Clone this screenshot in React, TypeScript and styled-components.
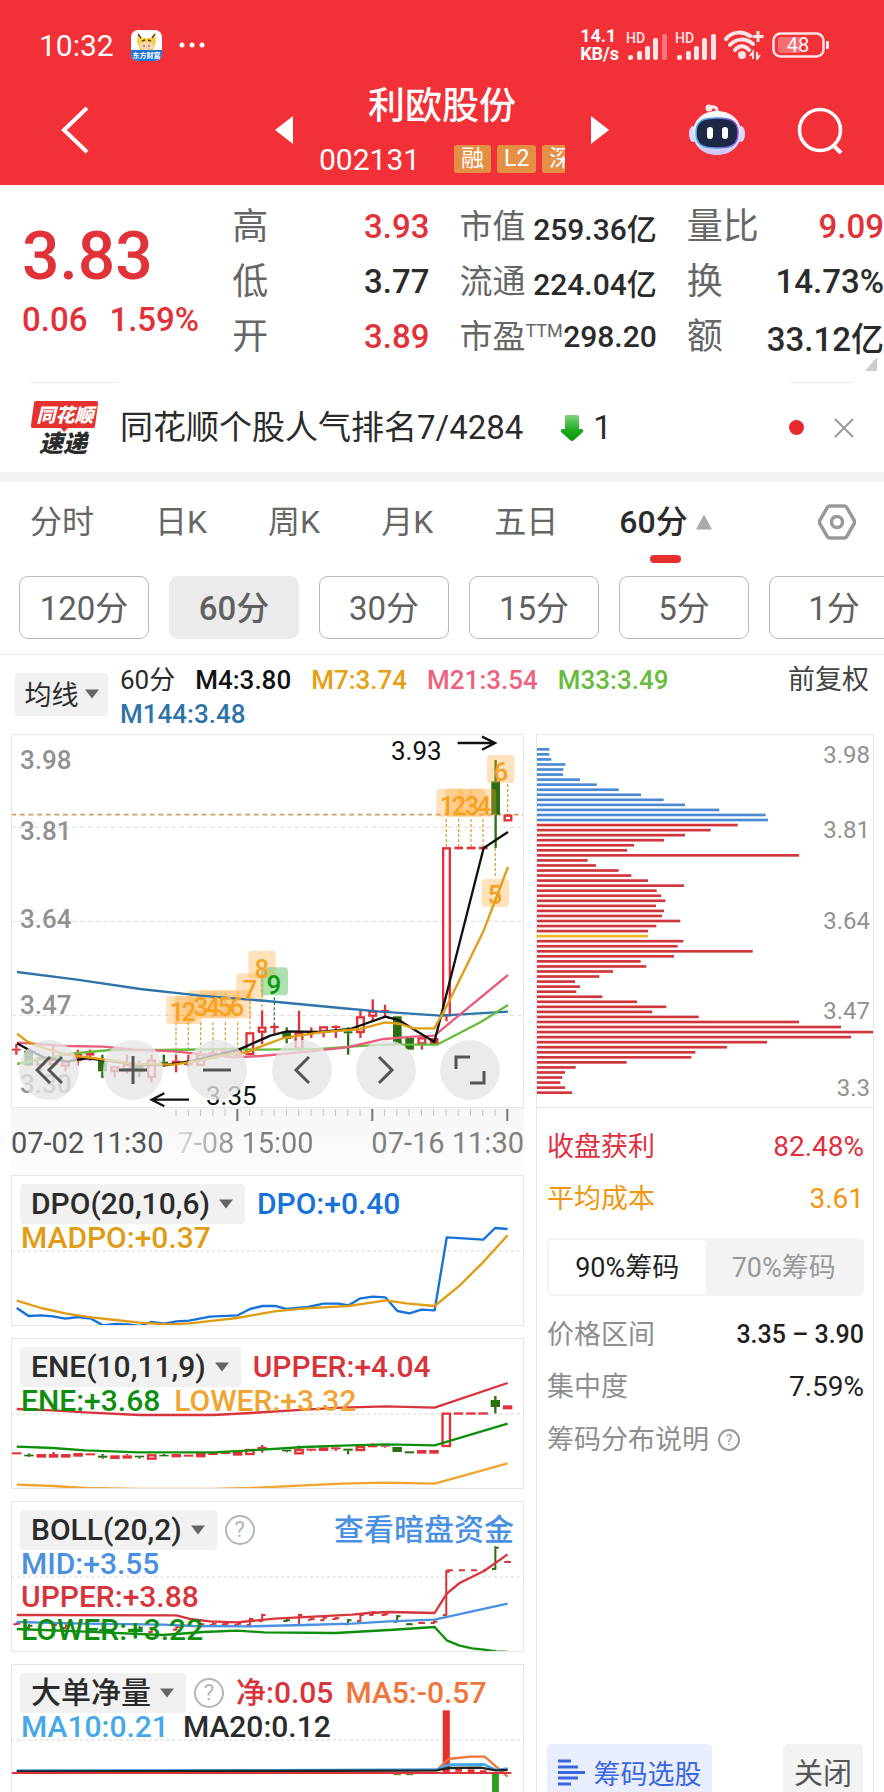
import React from 'react';
import styled, { createGlobalStyle } from 'styled-components';

const RED = '#e03238';
const GREEN = '#2c6e12';
const ORANGE = '#e09c14';
const BLUE = '#2f74a8';

const Global = createGlobalStyle`
  *, *::before, *::after { box-sizing: border-box; }
  body { margin: 0; background: #fff; font-family: Roboto, "Noto Sans CJK SC", sans-serif; color: #2b2b2b; }
  button { font: inherit; color: inherit; border: 0; background: none; padding: 0; white-space: nowrap; cursor: pointer; }
  svg { display: block; flex: none; }
  dl, dt, dd, h1, p { margin: 0; font-weight: inherit; }
`;

const Screen = styled.div`
  height: 100vh;
  overflow: hidden;
`;

/* ---------- header ---------- */
const Header = styled.header`
  background: #f23038;
  color: #fff;
  padding-top: 15px;
`;
const StatusBar = styled.div`
  height: 60px;
  padding: 0 54px 0 39px;
  display: flex;
  align-items: center;
  justify-content: space-between;
`;
const StatusGroup = styled.div<{ $gap: number }>`
  display: flex;
  align-items: center;
  gap: ${p => p.$gap}px;
`;
const Clock = styled.span`
  font-size: 30px;
`;
const Speed = styled.span`
  font-size: 18px;
  line-height: 18px;
  font-weight: 700;
`;
const NavBar = styled.nav`
  height: 110px;
  display: grid;
  grid-template-columns: 1fr 334px 1fr;
  align-items: center;
`;
const BackButton = styled.button`
  justify-self: start;
  margin-left: 60px;
`;
const TitleArea = styled.div`
  display: flex;
  align-items: center;
  justify-content: space-between;
`;
const TitleColumn = styled.div`
  width: 246px;
  padding-top: 4px;
`;
const StockName = styled.h1`
  font-size: 37px;
  line-height: 54px;
  font-weight: 500;
  text-align: center;
`;
const CodeRow = styled.div`
  display: flex;
  align-items: center;
  justify-content: space-between;
  height: 50px;
  font-size: 30px;
`;
const TagStrip = styled.div`
  display: flex;
  gap: 6px;
  width: 111px;
  overflow: hidden;
`;
const Tag = styled.span`
  flex: none;
  padding: 0 7px;
  height: 28px;
  line-height: 28px;
  border-radius: 3px;
  background: #e58f45;
  font-size: 23px;
`;
const NavActions = styled.div`
  display: flex;
  justify-content: flex-end;
  align-items: center;
  gap: 52px;
  padding-right: 40px;
`;

/* ---------- quote ---------- */
const Quote = styled.section`
  position: relative;
  height: 197px;
  padding: 14px 0 0 22px;
  display: grid;
  grid-template-columns: 180fr 197fr 197fr 197fr;
  gap: 30px;
`;
const PriceBlock = styled.div`
  color: ${RED};
  padding-top: 24px;
`;
const Price = styled.div`
  font-size: 66px;
  line-height: 68px;
  font-weight: 500;
`;
const Change = styled.div`
  display: flex;
  gap: 22px;
  font-size: 33px;
  line-height: 58px;
  font-weight: 500;
  white-space: nowrap;
`;
const Stats = styled.dl``;
const Stat = styled.div`
  display: flex;
  justify-content: space-between;
  align-items: center;
  height: 55px;
  white-space: nowrap;
`;
const StatLabel = styled.dt<{ $compact?: boolean }>`
  display: flex;
  font-size: ${p => (p.$compact ? 33 : 36)}px;
  line-height: 40px;
  color: #666;
`;
const Sup = styled.sup`
  font-size: 18px;
  line-height: 28px;
`;
const StatValue = styled.dd<{ $compact?: boolean; $up?: boolean }>`
  font-size: ${p => (p.$compact ? 30 : 33)}px;
  font-weight: 500;
  color: ${p => (p.$up ? RED : '#2b2b2b')};
`;
const Corner = styled.svg`
  position: absolute;
  right: 7px;
  bottom: 11px;
`;

/* ---------- news ---------- */
const Rules = styled.div`
  height: 1px;
  display: flex;
  justify-content: space-between;
  padding: 0 31px;
`;
const Rule = styled.span<{ $w: number }>`
  width: ${p => p.$w}px;
  background: #e8e8e8;
`;
const News = styled.section`
  height: 89px;
  padding: 0 30px 0 31px;
  display: flex;
  align-items: center;
`;
const Logo = styled.svg`
  margin-right: 21px;
`;
const Headline = styled.p`
  font-size: 33px;
  line-height: 46px;
  white-space: nowrap;
  margin-right: 37px;
`;
const RankChange = styled.span`
  display: flex;
  align-items: center;
  gap: 9px;
  font-size: 33px;
`;
const Dot = styled.span`
  width: 15px;
  height: 15px;
  border-radius: 50%;
  background: #e8282d;
  margin-left: auto;
  margin-right: 30px;
`;
const Band = styled.div`
  height: 10px;
  background: #f3f3f3;
`;

/* ---------- period tabs ---------- */
const Tabs = styled.div`
  height: 94px;
  padding: 0 28px 0 30px;
  display: flex;
  gap: 61px;
  align-items: flex-start;
`;
const TabButton = styled.button<{ $active?: boolean }>`
  display: flex;
  flex-direction: column;
  align-items: center;
  font-size: 32px;
  line-height: 80px;
  height: 81px;
  color: ${p => (p.$active ? '#2b2b2b' : '#666')};
  font-weight: ${p => (p.$active ? 500 : 400)};
`;
const TabLabel = styled.span`
  display: flex;
  align-items: center;
  gap: 8px;
`;
const Underline = styled.span`
  flex: none;
  margin-top: -7px;
  width: 31px;
  height: 8px;
  border-radius: 4px;
  background: #e6302e;
`;
const SettingsButton = styled.button`
  margin-left: auto;
  padding-top: 22px;
`;
const Pills = styled.div`
  display: flex;
  gap: 20px;
  padding: 0 0 15px 19px;
  overflow: hidden;
  border-bottom: 1px solid #eaeaea;
`;
const Pill = styled.button<{ $active?: boolean }>`
  flex: none;
  width: 130px;
  height: 63px;
  padding-bottom: 4px;
  border-radius: 9px;
  border: 1px solid ${p => (p.$active ? '#ebebeb' : '#b8b8b8')};
  background: ${p => (p.$active ? '#ebebeb' : '#fff')};
  font-size: 33px;
  color: #606060;
  font-weight: ${p => (p.$active ? 500 : 400)};
`;

/* ---------- moving averages ---------- */
const MaRow = styled.div`
  height: 79px;
  padding: 8px 15px 0;
  display: flex;
`;
const MaButton = styled.button`
  display: flex;
  align-items: center;
  justify-content: center;
  gap: 6px;
  width: 93px;
  height: 43px;
  margin: 10px 12px 0 0;
  padding-bottom: 2px;
  border-radius: 4px;
  background: #f1f1f1;
  font-size: 27px;
`;
const MaList = styled.div`
  flex: 1;
  display: flex;
  flex-wrap: wrap;
  align-content: flex-start;
  column-gap: 20px;
  padding-right: 60px;
  font-size: 26px;
  line-height: 34px;
  font-weight: 500;
`;
const Tone = styled.span<{ $c: string }>`
  color: ${p => p.$c};
`;
const Plain = styled.span`
  font-weight: 400;
`;
const Adjust = styled.button`
  align-self: flex-start;
  font-size: 27px;
  line-height: 34px;
  color: #444;
`;

/* ---------- charts ---------- */
const Body = styled.main`
  display: grid;
  grid-template-columns: 513fr 338fr;
  gap: 12px;
  padding: 0 10px 0 11px;
`;
const LeftColumn = styled.div`
  display: flex;
  flex-direction: column;
`;
const ChartBox = styled.section`
  position: relative;
  outline: 1px solid #e6e6e6;
  outline-offset: -1px;
`;
const Drawing = styled.svg`
  width: 100%;
  height: auto;
`;
const Controls = styled.div`
  position: absolute;
  left: 0;
  right: 0;
  bottom: 8px;
  display: flex;
  justify-content: space-between;
  padding: 0 24px 0 8px;
`;
const RoundButton = styled.button`
  width: 60px;
  height: 60px;
  border-radius: 50%;
  background: rgba(230, 230, 230, 0.78);
  display: flex;
  align-items: center;
  justify-content: center;
`;
const TimeAxis = styled.div`
  height: 67px;
  background: linear-gradient(#f6f6f6, #fdfdfd);
`;
const Dates = styled.div`
  display: flex;
  justify-content: space-between;
  padding-top: 3px;
  font-size: 29px;
  line-height: 36px;
  white-space: nowrap;
  color: #808080;
`;
const FirstDate = styled.span`
  color: #555;
`;
const FadedDate = styled.span`
  margin-right: 44px;
  background: linear-gradient(90deg, #ddd, #808080 50%);
  background-clip: text;
  -webkit-background-clip: text;
  color: transparent;
`;
const Panel = styled(ChartBox)`
  & + & { margin-top: 12px; }
`;
const Legend = styled.div`
  position: absolute;
  inset: 0;
  padding: 9px 10px 0 9px;
  font-size: 30px;
  line-height: 33px;
  font-weight: 500;
  white-space: nowrap;
`;
const LegendHead = styled.div`
  height: 37px;
  display: flex;
  align-items: flex-start;
  gap: 12px;
  line-height: 40px;
`;
const LegendLine = styled.div`
  display: flex;
  gap: 14px;
  padding-left: 1px;
`;
const IndicatorButton = styled.button`
  height: 40px;
  padding: 0 12px 0 11px;
  border-radius: 4px;
  background: #f1f1f1;
  display: flex;
  align-items: center;
  gap: 9px;
`;
const HelpButton = styled.button<{ $size: number }>`
  flex: none;
  width: ${p => p.$size}px;
  height: ${p => p.$size}px;
  border: 2px solid currentColor;
  border-radius: 50%;
  font-size: ${p => p.$size - 8}px;
  line-height: ${p => p.$size - 4}px;
  font-weight: 400;
  color: #b5b5b5;
`;
const HeadHelp = styled(HelpButton)`
  margin: 5px 0 0 -4px;
`;
const InfoHelp = styled(HelpButton)`
  color: #999;
`;
const MoreLink = styled.a`
  margin-left: auto;
  color: #4a90e2;
  font-size: 30px;
  font-weight: 500;
  text-decoration: none;
`;

/* ---------- chip distribution ---------- */
const RightColumn = styled.aside`
  display: flex;
  flex-direction: column;
  border: 1px solid #e6e6e6;
`;
const ChipChart = styled.div`
  border-bottom: 1px solid #e6e6e6;
`;
const Facts = styled.dl`
  padding: 13px 9px 0 10px;
  font-size: 27px;
  line-height: 52px;
`;
const Fact = styled.div<{ $c?: string }>`
  display: flex;
  justify-content: space-between;
  color: ${p => p.$c || '#8e8e8e'};
`;
const FactValue = styled.dd<{ $c?: string; $strong?: boolean }>`
  color: ${p => p.$c || 'inherit'};
  font-weight: ${p => (p.$strong ? 500 : 400)};
  font-size: ${p => (p.$strong ? 25 : 28)}px;
`;
const Segment = styled.div`
  display: flex;
  height: 58px;
  margin: 13px 9px 0 10px;
  padding: 2px;
  border-radius: 5px;
  background: #f3f3f3;
`;
const SegmentButton = styled.button<{ $active?: boolean }>`
  flex: 1;
  padding-bottom: 3px;
  border-radius: 4px;
  font-size: 27px;
  background: ${p => (p.$active ? '#fff' : 'transparent')};
  color: ${p => (p.$active ? '#1f1f1f' : '#999')};
`;
const Explain = styled.p`
  display: flex;
  align-items: center;
  gap: 9px;
  padding-left: 10px;
  font-size: 27px;
  line-height: 54px;
  color: #8e8e8e;
`;
const Footer = styled.div`
  margin-top: auto;
  display: flex;
  justify-content: space-between;
  padding: 0 10px 10px 10px;
`;
const PickButton = styled.button`
  width: 165px;
  height: 60px;
  padding-bottom: 4px;
  border-radius: 5px;
  background: #e8eefd;
  color: #3b66e0;
  font-size: 27px;
  display: flex;
  align-items: center;
  justify-content: center;
  gap: 9px;
`;
const CloseButton = styled.button`
  width: 80px;
  height: 60px;
  padding-bottom: 6px;
  border-radius: 5px;
  background: #f3f3f3;
  color: #555;
  font-size: 29px;
`;

const Caret = ({ up = false, size = 14, color = '#666' }: { up?: boolean; size?: number; color?: string }) => (
  <svg width={size} height={size} viewBox="0 0 14 14" fill={color}>
    <path d={up ? 'M7 0.500L14 13.500H0z' : 'M0 2.500H14L7 11.500z'} />
  </svg>
);

/* index, open/close top, bottom, wick top, wick bottom; kind: h hollow red, r solid red, g green */
type Candle = [number, number, number, number, number, 'h' | 'r' | 'g'];

const Candles = ({ data, step, width }: { data: Candle[]; step: number; width: number }) => (
  <>
    {data.map(([i, top, bottom, wt, wb, kind]) => {
      const x = 48 + i * step;
      const c = kind === 'g' ? GREEN : RED;
      const inset = kind === 'h' ? 3 : 0;
      return (
        <g key={i}>
          {wt < top && <path d={`M${x} ${wt}V${top}`} stroke={c} strokeWidth="7" />}
          {wb > bottom && <path d={`M${x} ${bottom}V${wb}`} stroke={c} strokeWidth="7" />}
          <rect
            x={x - width / 2 + inset}
            y={top + inset}
            width={width - inset * 2}
            height={Math.max(1, bottom - top - inset * 2)}
            fill={kind === 'h' ? '#fff' : c}
            stroke={kind === 'h' ? c : 'none'}
            strokeWidth="7"
          />
        </g>
      );
    })}
  </>
);

const Curve = ({ points, color, w = 7 }: { points: string; color: string; w?: number }) => (
  <polyline points={points} fill="none" stroke={color} strokeWidth={w} strokeLinejoin="round" />
);

const mainCandles: Candle[] = [
  [0, 954, 960, 940, 972, 'r'], [1, 960, 1005, 952, 1005, 'g'], [2, 980, 1005, 975, 1020, 'h'], [3, 985, 1003, 940, 1012, 'h'],
  [4, 990, 1008, 990, 1022, 'h'], [5, 970, 990, 957, 1005, 'r'], [6, 965, 975, 957, 990, 'r'], [7, 988, 1022, 972, 1042, 'g'],
  [8, 1007, 1024, 1007, 1040, 'h'], [9, 1000, 1018, 972, 1030, 'h'], [10, 1005, 1025, 990, 1040, 'g'], [11, 987, 1042, 972, 1055, 'h'],
  [12, 993, 1003, 972, 1008, 'g'], [13, 990, 998, 972, 1025, 'r'], [14, 992, 1003, 972, 1008, 'r'], [15, 970, 1006, 960, 1006, 'h'],
  [16, 965, 983, 955, 985, 'h'], [17, 960, 972, 955, 975, 'h'], [18, 957, 975, 955, 975, 'h'], [19, 905, 973, 905, 973, 'h'],
  [20, 888, 906, 840, 940, 'h'], [21, 886, 892, 882, 908, 'r'], [22, 905, 925, 890, 938, 'g'], [23, 905, 957, 840, 960, 'h'],
  [24, 902, 908, 890, 922, 'r'], [25, 887, 906, 887, 920, 'h'], [26, 886, 892, 884, 922, 'r'], [27, 902, 908, 890, 972, 'g'],
  [28, 857, 907, 840, 922, 'h'], [29, 840, 858, 806, 870, 'h'], [30, 838, 844, 822, 860, 'r'], [31, 857, 940, 857, 940, 'g'],
  [32, 922, 957, 922, 957, 'g'], [33, 920, 941, 920, 957, 'h'], [34, 922, 941, 922, 941, 'r'], [35, 350, 857, 350, 872, 'h'],
  [36, 348, 356, 348, 356, 'r'], [37, 348, 356, 348, 356, 'r'], [38, 348, 356, 348, 356, 'r'], [39, 152, 252, 88, 352, 'g'],
  [40, 252, 272, 252, 272, 'h'],
];

/* left edge, top edge, stem x, stem start, stem end, up-count flag */
const badges: [number, number, number, number, number, boolean?][] = [
  [498, 796, 527, 875, 970], [523, 796, 564, 875, 970], [564, 779, 601, 875, 965], [597, 779, 638, 875, 960],
  [634, 779, 675, 875, 955], [671, 779, 712, 875, 955], [708, 728, 749, 812, 905], [744, 660, 785, 745, 840],
  [781, 710, 822, 800, 885, true],
  [1308, 174, 1338, 265, 350], [1334, 174, 1375, 265, 350], [1372, 174, 1412, 265, 350], [1406, 174, 1448, 265, 350],
  [1444, 445, 1485, 352, 440], [1460, 73, 1522, 160, 250],
];

const MainChart = () => (
  <Drawing viewBox="0 0 513 374" role="img" aria-label="60分 K线图">
    <g transform="translate(-10.667 -3.333) scale(0.33333)">
      <path d="M32 290H1569M32 572H1569M32 854H1569" stroke="#e2e2e2" strokeWidth="4" strokeDasharray="14 9" />
      <path d="M32 252H1569" stroke="#cf9f62" strokeWidth="5" strokeDasharray="15 11" />
    </g>
    <g fill="#919191" fontSize="26" fontWeight="500">
      <text x="9" y="35">3.98</text>
      <text x="9" y="106">3.81</text>
      <text x="9" y="194">3.64</text>
      <text x="9" y="280">3.47</text>
      <text x="9" y="359">3.30</text>
    </g>
    <g transform="translate(-10.667 -3.333) scale(0.33333)">
      <Candles data={mainCandles} step={36.87} width={26} />
      {badges.map(([x, y, stem, from, to, up]) => (
        <g key={x}>
          <rect x={x} y={y} width="82" height="84" rx="10" fill={up ? '#62c162' : '#ffa530'} opacity={up ? 0.5 : 0.32} />
          <path d={`M${stem} ${from}V${to}`} stroke={up ? '#3b8a3b' : '#d9a63a'} strokeWidth="4" strokeDasharray="9 6" />
        </g>
      ))}
      <Curve color={BLUE} points="50,724 230,747 420,775 600,795 800,811 1020,832 1140,843 1320,855 1523,843" />
      <Curve color="#68bb3c" points="50,1000 130,985 200,970 330,958 480,958 700,955 780,957 960,955 1050,948 1150,942 1310,942 1440,875 1523,823" />
      <Curve color="#e85d7c" points="50,936 200,946 310,948 400,957 520,962 600,970 700,980 780,976 900,965 1040,950 1150,925 1240,918 1302,915 1523,733" />
      <Curve color="#111" points="50,938 85,957 130,980 200,992 260,983 320,990 420,1003 500,1003 580,990 715,957 810,915 860,902 960,904 1050,895 1155,858 1195,868 1302,934 1450,352 1523,304" />
      <Curve color={ORANGE} points="50,909 80,932 130,952 200,972 300,985 400,1000 520,1002 600,990 660,975 740,965 780,948 850,922 960,905 1080,895 1155,875 1200,880 1240,893 1302,893 1345,815 1450,600 1523,409" />
      <g fill="none" stroke="#111" strokeWidth="7">
        <path d="M1372 37H1482M1445 18L1484 37L1445 57" />
        <path d="M566 1107H456M492 1088L454 1107L492 1127" />
      </g>
    </g>
    <g fill="#f6a11f" fontSize="26" fontWeight="500" textAnchor="middle">
      <text x="166" y="287">1</text>
      <text x="178" y="287">2</text>
      <text x="190" y="282">3</text>
      <text x="202" y="282">4</text>
      <text x="214" y="282">5</text>
      <text x="226" y="282">6</text>
      <text x="239" y="265">7</text>
      <text x="251" y="244">8</text>
      <text x="263" y="260" fill="#0a9a0a">9</text>
      <text x="436" y="81">1</text>
      <text x="448" y="81">2</text>
      <text x="461" y="81">3</text>
      <text x="473" y="81">4</text>
      <text x="484" y="170">5</text>
      <text x="490" y="47">6</text>
    </g>
    <g fill="#111" fontSize="26">
      <text x="380" y="26">3.93</text>
      <text x="195" y="371">3.35</text>
    </g>
  </Drawing>
);

const ticks = Array.from({ length: 28 }, (_, i) => ({ x: 165 + i * 12.27, major: i % 11 === 5 }));

const chipEnds = [
  58, 58, 64, 106, 100, 99, 150, 200, 266, 333, 401, 465, 568, 707, 714, 623, 542, 465, 402, 312, 291, 807, 173, 198,
  266, 304, 354, 462, 380, 393, 406, 378, 402, 396, 451, 379, 354, 354, 460, 443, 668, 432, 332, 349, 249, 208, 135,
  150, 139, 217, 321, 409, 367, 506, 807, 933, 1031, 963, 711, 591, 496, 484, 290, 137, 105, 97, 91, 105, 126,
];

const ChipBars = () => (
  <Drawing viewBox="0 0 336 372" role="img" aria-label="筹码分布">
    <g transform="translate(-7 -4.333) scale(0.33333)">
      {chipEnds.map((end, i) => (
        <rect key={i} x="21" y={52 + i * 15.147} width={end - 21} height="8"
          fill={i < 15 ? '#4b8ad3' : i === 37 ? '#f0b428' : '#d0363c'} />
      ))}
    </g>
    <g fill="#919191" fontSize="24" textAnchor="end">
      <text x="333" y="28">3.98</text>
      <text x="333" y="103">3.81</text>
      <text x="333" y="194">3.64</text>
      <text x="333" y="284">3.47</text>
      <text x="333" y="361">3.3</text>
    </g>
  </Drawing>
);

const eneCandles: Candle[] = [
  [0, 874, 880, 874, 880, 'r'], [1, 881, 886, 877, 888, 'g'], [2, 879, 890, 879, 890, 'r'], [3, 879, 890, 873, 890, 'r'],
  [4, 879, 890, 879, 890, 'r'], [5, 876, 887, 876, 887, 'r'], [6, 877, 883, 877, 883, 'r'], [7, 884, 890, 879, 893, 'g'],
  [8, 883, 894, 883, 894, 'r'], [9, 883, 893, 879, 893, 'r'], [10, 884, 889, 884, 893, 'g'], [11, 880, 896, 880, 896, 'h'],
  [12, 882, 886, 879, 886, 'g'], [13, 879, 889, 879, 889, 'r'], [14, 881, 887, 881, 887, 'r'], [15, 876, 889, 876, 889, 'r'],
  [16, 874, 882, 874, 882, 'r'], [17, 874, 879, 874, 879, 'r'], [18, 872, 884, 872, 884, 'r'], [19, 864, 882, 864, 882, 'h'],
  [20, 858, 866, 852, 875, 'r'], [22, 866, 871, 866, 874, 'g'], [23, 864, 880, 854, 880, 'h'], [24, 863, 869, 863, 871, 'r'],
  [25, 859, 870, 859, 870, 'r'], [26, 859, 865, 859, 870, 'r'], [27, 863, 869, 863, 880, 'g'], [28, 855, 870, 853, 870, 'h'],
  [29, 853, 859, 847, 859, 'r'], [30, 853, 857, 850, 860, 'r'], [31, 858, 873, 858, 873, 'g'], [32, 871, 877, 871, 877, 'g'],
  [33, 867, 878, 867, 878, 'r'], [34, 867, 878, 867, 878, 'r'], [35, 755, 858, 755, 858, 'h'], [36, 754, 761, 754, 761, 'r'],
  [37, 754, 761, 754, 761, 'r'], [38, 754, 761, 754, 761, 'r'], [39, 717, 738, 705, 757, 'g'], [40, 733, 745, 733, 745, 'r'],
];

/* index, high, low, falling */
const bollBars: [number, number, number, boolean?][] = [
  [0, 394, 402], [1, 400, 412, true], [3, 398, 418], [4, 400, 414], [7, 400, 420, true], [10, 406, 420, true], [11, 408, 425], [13, 404, 418],
  [15, 396, 410], [16, 394, 404], [17, 394, 402], [18, 394, 404], [19, 380, 404], [20, 368, 392], [22, 384, 392, true],
  [23, 368, 404], [24, 380, 388], [25, 376, 390], [26, 378, 386], [27, 384, 402, true], [28, 368, 392], [29, 360, 374],
  [30, 366, 374], [31, 372, 394, true], [32, 396, 402, true], [33, 392, 398], [34, 388, 398], [35, 238, 374],
  [39, 166, 236, true], [40, 209, 215],
];

const PanelChart = ({ top, label, children }: { top: number; label: string; children: React.ReactNode }) => (
  <Drawing viewBox="0 0 513 151" role="img" aria-label={label}>
    <g transform={`translate(${-31 / 2.958} ${-top / 3}) scale(0.33807 0.33333)`}>
      <path d={`M31 ${top + 228}H1548`} stroke="#e2e2e2" strokeWidth="4" strokeDasharray="9 8" />
      {children}
    </g>
  </Drawing>
);

const Robot = () => (
  <svg width="56" height="54" viewBox="0 0 56 54">
    <defs>
      <linearGradient id="shell" x1="0" y1="0" x2="0" y2="1">
        <stop offset="0" stopColor="#fff" />
        <stop offset="1" stopColor="#cfc4f7" />
      </linearGradient>
      <linearGradient id="visor" x1="0" y1="0" x2="1" y2="0">
        <stop offset="0" stopColor="#3fb6d8" />
        <stop offset="1" stopColor="#8a55e6" />
      </linearGradient>
    </defs>
    <path d="M21 4C26 3 29 5 28 10" fill="none" stroke="#f6e6ee" strokeWidth="3" />
    <circle cx="20" cy="5" r="3.500" fill="#f6e6ee" />
    <ellipse cx="4" cy="31" rx="4" ry="8" fill="#d9d5fb" />
    <ellipse cx="52" cy="31" rx="4" ry="8" fill="#d9d5fb" />
    <path d="M28 8C42 8 52 17 52 30S42 52 28 52S4 43 4 30S14 8 28 8z" fill="url(#shell)" />
    <path d="M28 15C41 15 49 17 49 30S41 45 28 45S7 43 7 30S15 15 28 15z" fill="#1e2745" stroke="url(#visor)" strokeWidth="1.500" />
    <rect x="18" y="24" width="6" height="12" rx="3" fill="#fff" />
    <rect x="33" y="24" width="6" height="12" rx="3" fill="#fff" />
  </svg>
);

const Signal = ({ weak = false }: { weak?: boolean }) => (
  <svg width="42" height="35" viewBox="0 -4 42 35" fill="#ffe4e5">
    <text x="0" y="11" fontSize="14" fontWeight="500">HD</text>
    <rect x="2" y="23" width="5" height="5" rx="2" />
    <rect x="11" y="19" width="5" height="9" rx="2" />
    <rect x="19" y="14" width="5" height="14" rx="2" />
    <rect x="27" y="6" width="5" height="22" rx="2" />
    <rect x="36" y="2" width="5" height="26" rx="2" opacity={weak ? 0.4 : 1} />
  </svg>
);

export default function App() {
  return (
    <Screen>
      <Global />
      <Header>
        <StatusBar>
          <StatusGroup $gap={17}>
            <Clock>10:32</Clock>
            <svg width="31" height="31" viewBox="0 0 31 31">
              <rect width="31" height="31" rx="7" fill="#fff" />
              <path d="M0 20H31V24A7 7 0 0 1 24 31H7A7 7 0 0 1 0 24z" fill="#1f74d6" />
              <path d="M7 4L11 8H20L24 4L25 12L22 20H9L6 12z" fill="#f4d24c" />
              <path d="M7 4L10 8M24 4L21 8M11 11L14 10M17 10L20 11" stroke="#5a4021" strokeWidth="1.500" />
              <ellipse cx="15.500" cy="16" rx="7" ry="4" fill="#fbd3b8" />
              <circle cx="13" cy="16" r="1" fill="#b96a4a" />
              <circle cx="18" cy="16" r="1" fill="#b96a4a" />
              <text x="15.500" y="28" fontSize="7" fontWeight="700" textAnchor="middle" fill="#fff">东方财富</text>
            </svg>
            <svg width="26" height="6" viewBox="0 0 26 6" fill="#fff">
              <circle cx="3" cy="3" r="2.500" />
              <circle cx="13" cy="3" r="2.500" />
              <circle cx="23" cy="3" r="2.500" />
            </svg>
          </StatusGroup>
          <StatusGroup $gap={7}>
            <Speed>14.1<br />KB/s</Speed>
            <Signal weak />
            <Signal />
            <svg width="41" height="30" viewBox="0 0 41 30" fill="none" stroke="#ffe4e5" strokeWidth="4">
              <path d="M2 9C8 1 19 1 26 6M6 15C12 8 22 8 29 14M11 20C15 15 21 15 25 20" strokeLinecap="round" />
              <circle cx="18" cy="25" r="2" fill="#ffe4e5" />
              <path d="M34 1V12M28.500 6.500H39.500" strokeWidth="3" />
              <path d="M29 29V22L26 26M33 22V29L36 25" strokeWidth="2" />
            </svg>
            <svg width="58" height="26" viewBox="0 0 58 26">
              <rect x="1.500" y="1.500" width="50" height="23" rx="7" fill="none" stroke="#ffe4e5" strokeWidth="2.500" />
              <path d="M6 8Q6 5 9 5H28V21H9Q6 21 6 18z" fill="#fff" opacity=".3" />
              <rect x="54" y="9" width="3" height="8" rx="1" fill="#ffe4e5" />
              <text x="26" y="20" fontSize="20" textAnchor="middle" fill="#fff">48</text>
            </svg>
          </StatusGroup>
        </StatusBar>
        <NavBar>
          <BackButton aria-label="返回">
            <svg width="30" height="48" viewBox="0 0 30 48" fill="none" stroke="#fff" strokeWidth="4"><path d="M27 2L4 24L27 46" /></svg>
          </BackButton>
          <TitleArea>
            <button aria-label="上一只"><svg width="18" height="28" viewBox="0 0 18 28" fill="#fff"><path d="M18 0V28L0 14z" /></svg></button>
            <TitleColumn>
              <StockName>利欧股份</StockName>
              <CodeRow>
                <span>002131</span>
                <TagStrip><Tag>融</Tag><Tag>L2</Tag><Tag>深</Tag></TagStrip>
              </CodeRow>
            </TitleColumn>
            <button aria-label="下一只"><svg width="18" height="28" viewBox="0 0 18 28" fill="#fff"><path d="M0 0V28L18 14z" /></svg></button>
          </TitleArea>
          <NavActions>
            <button aria-label="助手"><Robot /></button>
            <button aria-label="搜索">
              <svg width="47" height="47" viewBox="0 0 47 47" fill="none" stroke="#fff" strokeWidth="3.500"><circle cx="23" cy="23" r="20.500" /><path d="M36 38L44 46" strokeWidth="4" /></svg>
            </button>
          </NavActions>
        </NavBar>
      </Header>

      <Quote>
        <PriceBlock>
          <Price>3.83</Price>
          <Change><span>0.06</span><span>1.59%</span></Change>
        </PriceBlock>
        <Stats>
          <Stat><StatLabel>高</StatLabel><StatValue $up>3.93</StatValue></Stat>
          <Stat><StatLabel>低</StatLabel><StatValue>3.77</StatValue></Stat>
          <Stat><StatLabel>开</StatLabel><StatValue $up>3.89</StatValue></Stat>
        </Stats>
        <Stats>
          <Stat><StatLabel $compact>市值</StatLabel><StatValue $compact>259.36亿</StatValue></Stat>
          <Stat><StatLabel $compact>流通</StatLabel><StatValue $compact>224.04亿</StatValue></Stat>
          <Stat><StatLabel $compact>市盈<Sup>TTM</Sup></StatLabel><StatValue $compact>298.20</StatValue></Stat>
        </Stats>
        <Stats>
          <Stat><StatLabel>量比</StatLabel><StatValue $up>9.09</StatValue></Stat>
          <Stat><StatLabel>换</StatLabel><StatValue>14.73%</StatValue></Stat>
          <Stat><StatLabel>额</StatLabel><StatValue>33.12亿</StatValue></Stat>
        </Stats>
        <Corner width="12" height="14" viewBox="0 0 12 14" fill="#ccc"><path d="M12 0V14H0z" /></Corner>
      </Quote>
      <Rules><Rule $w={87} /><Rule $w={63} /></Rules>
      <News>
        <Logo width="68" height="56" viewBox="0 0 68 56">
          <path d="M5 1H65Q68 1 67 4L64 26Q64 28 61 28H37L33 32L30 28H2Q-0.500 28 0 25L3 3Q3 1 5 1z" fill="#e5322f" />
          <text x="34" y="22" fontSize="19" fontWeight="900" fontStyle="italic" textAnchor="middle" fill="#fff">同花顺</text>
          <text x="32" y="52" fontSize="24" fontWeight="900" fontStyle="italic" textAnchor="middle" fill="#2b2b2b">速递</text>
        </Logo>
        <Headline>同花顺个股人气排名7/4284</Headline>
        <RankChange>
          <svg width="24" height="28" viewBox="0 0 24 28">
            <defs>
              <linearGradient id="fall" x1="0" y1="0" x2="0" y2="1">
                <stop offset="0" stopColor="#7ed37c" />
                <stop offset="0.600" stopColor="#1cab1c" />
                <stop offset="1" stopColor="#069306" />
              </linearGradient>
            </defs>
            <path d="M5 2Q5 1 7 1H17Q19 1 19 3V15H22Q24 16 23 18L14 26Q12 28 10 26L1 18Q0 16 2 15H5z" fill="url(#fall)" />
          </svg>
          1
        </RankChange>
        <Dot />
        <button aria-label="关闭提示">
          <svg width="20" height="20" viewBox="0 0 20 20" stroke="#999" strokeWidth="2"><path d="M1 1L19 19M19 1L1 19" /></svg>
        </button>
      </News>
      <Band />

      <Tabs>
        <TabButton>分时</TabButton>
        <TabButton>日K</TabButton>
        <TabButton>周K</TabButton>
        <TabButton>月K</TabButton>
        <TabButton>五日</TabButton>
        <TabButton $active>
          <TabLabel>60分<Caret up size={16} color="#aaa" /></TabLabel>
          <Underline />
        </TabButton>
        <SettingsButton aria-label="设置">
          <svg width="38" height="36" viewBox="0 0 38 36" fill="none" stroke="#999" strokeWidth="3.500">
            <path d="M12 2H26Q28 2 29 4L36 16Q37 18 36 20L29 32Q28 34 26 34H12Q10 34 9 32L2 20Q1 18 2 16L9 4Q10 2 12 2z" />
            <circle cx="19" cy="18" r="5.500" />
          </svg>
        </SettingsButton>
      </Tabs>
      <Pills>
        <Pill>120分</Pill>
        <Pill $active>60分</Pill>
        <Pill>30分</Pill>
        <Pill>15分</Pill>
        <Pill>5分</Pill>
        <Pill>1分</Pill>
      </Pills>

      <MaRow>
        <MaButton>均线<Caret /></MaButton>
        <MaList>
          <Plain>60分</Plain>
          <Tone $c="#111">M4:3.80</Tone>
          <Tone $c="#e8a013">M7:3.74</Tone>
          <Tone $c="#ee6280">M21:3.54</Tone>
          <Tone $c="#68bb3c">M33:3.49</Tone>
          <Tone $c="#2f74a8">M144:3.48</Tone>
        </MaList>
        <Adjust>前复权</Adjust>
      </MaRow>

      <Body>
        <LeftColumn>
          <ChartBox>
            <MainChart />
            <Controls>
              <RoundButton aria-label="最早">
                <svg width="28" height="30" viewBox="0 0 28 30" fill="none" stroke="#555" strokeWidth="3"><path d="M15 2L2 15L15 28M27 2L14 15L27 28" /></svg>
              </RoundButton>
              <RoundButton aria-label="放大">
                <svg width="28" height="28" viewBox="0 0 28 28" stroke="#555" strokeWidth="3"><path d="M14 0V28M0 14H28" /></svg>
              </RoundButton>
              <RoundButton aria-label="缩小">
                <svg width="28" height="28" viewBox="0 0 28 28" stroke="#555" strokeWidth="3"><path d="M0 14H28" /></svg>
              </RoundButton>
              <RoundButton aria-label="左移">
                <svg width="18" height="30" viewBox="0 0 18 30" fill="none" stroke="#555" strokeWidth="3"><path d="M16 2L3 15L16 28" /></svg>
              </RoundButton>
              <RoundButton aria-label="右移">
                <svg width="18" height="30" viewBox="0 0 18 30" fill="none" stroke="#555" strokeWidth="3"><path d="M2 2L15 15L2 28" /></svg>
              </RoundButton>
              <RoundButton aria-label="全屏">
                <svg width="32" height="30" viewBox="0 0 32 30" fill="none" stroke="#555" strokeWidth="3"><path d="M2 14V2H16M30 16V28H16" /></svg>
              </RoundButton>
            </Controls>
          </ChartBox>
          <TimeAxis>
            <Drawing viewBox="0 0 513 14">
              {ticks.map(({ x, major }) => (
                <path key={x} d={`M${x} 1V${major ? 13 : 8}`} stroke={major ? '#777' : '#c4c4c4'} strokeWidth={major ? 2 : 1} />
              ))}
            </Drawing>
            <Dates>
              <FirstDate>07-02 11:30</FirstDate>
              <FadedDate>7-08 15:00</FadedDate>
              <span>07-16 11:30</span>
            </Dates>
          </TimeAxis>

          <Panel>
            <PanelChart top={41} label="DPO">
              <Curve color="#1672d8" points="48,440 83,464 120,462 155,465 192,472 230,467 268,472 303,492 340,488 376,489 411,494 445,482 485,487 520,480 558,478 620,466 702,462 738,443 775,434 812,434 845,443 910,437 955,427 1000,427 1030,432 1062,412 1100,406 1138,408 1174,449 1210,456 1245,445 1284,447 1320,228 1428,235 1463,200 1500,203" />
              <Curve color={ORANGE} points="48,418 120,440 195,457 270,468 340,476 411,484 490,489 560,486 630,478 700,470 810,450 900,441 1030,434 1140,417 1200,426 1284,434 1358,373 1430,300 1500,222" />
            </PanelChart>
            <Legend>
              <LegendHead>
                <IndicatorButton>DPO(20,10,6)<Caret /></IndicatorButton>
                <Tone $c="#1672d8">DPO:+0.40</Tone>
              </LegendHead>
              <LegendLine><Tone $c={ORANGE}>MADPO:+0.37</Tone></LegendLine>
            </Legend>
          </Panel>

          <Panel>
            <PanelChart top={531} label="ENE">
              <Candles data={eneCandles} step={36.3} width={28} />
              <Curve color="#d8343c" points="48,744 155,748 250,754 411,762 630,762 740,756 900,746 1010,740 1140,736 1284,740 1500,666" />
              <Curve color="#0d8f0d" points="48,857 155,861 250,868 411,874 630,874 740,868 900,858 1010,854 1140,850 1284,853 1500,788" />
              <Curve color="#f0a431" points="48,971 155,975 250,981 411,984 630,984 740,981 900,973 1010,968 1140,965 1284,968 1500,907" />
            </PanelChart>
            <Legend>
              <LegendHead>
                <IndicatorButton>ENE(10,11,9)<Caret /></IndicatorButton>
                <Tone $c="#d8343c">UPPER:+4.04</Tone>
              </LegendHead>
              <LegendLine><Tone $c="#0d8f0d">ENE:+3.68</Tone><Tone $c="#f0a431">LOWER:+3.32</Tone></LegendLine>
            </Legend>
          </Panel>

          <Panel>
            <PanelChart top={30} label="BOLL">
              {bollBars.map(([i, high, low, falling]) => {
                const x = 48 + i * 36.3;
                return (
                  <path key={i} d={`M${x} ${high}V${low}M${x - 10} ${low - 2}H${x}M${x} ${high + 4}H${x + 10}`} stroke={falling ? GREEN : '#d8343c'} strokeWidth="6" fill="none" />
                );
              })}
              <path d="M1320 238H1436" stroke="#d8343c" strokeWidth="6" strokeDasharray="18 18" />
              <Curve color="#d8343c" points="48,372 520,373 560,384 620,391 700,394 812,383 1040,371 1090,366 1150,363 1284,366 1320,308 1358,276 1430,240 1500,190" />
              <Curve color="#4a90e2" points="48,393 250,398 480,401 570,405 740,406 900,402 1040,398 1150,391 1284,386 1500,338" />
              <Curve color="#0d8f0d" points="48,414 250,422 480,432 600,423 700,419 780,424 990,426 1150,417 1284,408 1320,448 1358,464 1395,472 1430,476 1465,481 1500,483" />
            </PanelChart>
            <Legend>
              <LegendHead>
                <IndicatorButton>BOLL(20,2)<Caret /></IndicatorButton>
                <HeadHelp $size={30} aria-label="BOLL说明">?</HeadHelp>
                <MoreLink href="#funds">查看暗盘资金</MoreLink>
              </LegendHead>
              <LegendLine><Tone $c="#4a90e2">MID:+3.55</Tone></LegendLine>
              <LegendLine><Tone $c="#d8343c">UPPER:+3.88</Tone></LegendLine>
              <LegendLine><Tone $c="#0d8f0d">LOWER:+3.22</Tone></LegendLine>
            </Legend>
          </Panel>

          <Panel>
            <PanelChart top={519} label="大单净量">
              <rect x="1308" y="658" width="21" height="188" fill="#e6302e" />
              <rect x="1454" y="846" width="20" height="120" fill="#2f9a1f" />
              <path d="M1345 838H1365M1382 839H1402M1418 842H1438" stroke="#e6302e" strokeWidth="9" />
              <path d="M1163 851H1184M1199 851H1221" stroke="#7b8a2a" strokeWidth="4" />
              <Curve color="#f0763c" points="48,840 1290,838 1325,804 1390,797 1432,797 1500,857" />
              <Curve color="#46a8e8" w={8} points="48,839 780,838 1290,836 1325,821 1430,820 1465,837 1500,833" />
              <Curve color="#222" w={7} points="48,841 780,840 1290,838 1325,831 1420,830 1465,838 1500,837" />
              <path d="M31 846H1511" stroke="#d8343c" strokeWidth="6" />
            </PanelChart>
            <Legend>
              <LegendHead>
                <IndicatorButton>大单净量<Caret /></IndicatorButton>
                <HeadHelp $size={30} aria-label="大单净量说明">?</HeadHelp>
                <Tone $c="#d8343c">净:0.05</Tone>
                <Tone $c="#f0763c">MA5:-0.57</Tone>
              </LegendHead>
              <LegendLine><Tone $c="#46a8e8">MA10:0.21</Tone><Tone $c="#2b2b2b">MA20:0.12</Tone></LegendLine>
            </Legend>
          </Panel>
        </LeftColumn>

        <RightColumn>
          <ChipChart><ChipBars /></ChipChart>
          <Facts>
            <Fact $c="#e0303f"><dt>收盘获利</dt><FactValue>82.48%</FactValue></Fact>
            <Fact $c="#f0960f"><dt>平均成本</dt><FactValue>3.61</FactValue></Fact>
          </Facts>
          <Segment>
            <SegmentButton $active>90%筹码</SegmentButton>
            <SegmentButton>70%筹码</SegmentButton>
          </Segment>
          <Facts>
            <Fact><dt>价格区间</dt><FactValue $c="#1f1f1f" $strong>3.35 – 3.90</FactValue></Fact>
            <Fact><dt>集中度</dt><FactValue $c="#1f1f1f">7.59%</FactValue></Fact>
          </Facts>
          <Explain>筹码分布说明<InfoHelp $size={22} aria-label="筹码分布说明">?</InfoHelp></Explain>
          <Footer>
            <PickButton>
              <svg width="27" height="27" viewBox="0 0 27 27" stroke="#3b66e0" strokeWidth="3">
                <path d="M0 2H13M0 8H20M0 13.500H27M0 19H20M0 25H13" />
              </svg>
              筹码选股
            </PickButton>
            <CloseButton>关闭</CloseButton>
          </Footer>
        </RightColumn>
      </Body>
    </Screen>
  );
}
